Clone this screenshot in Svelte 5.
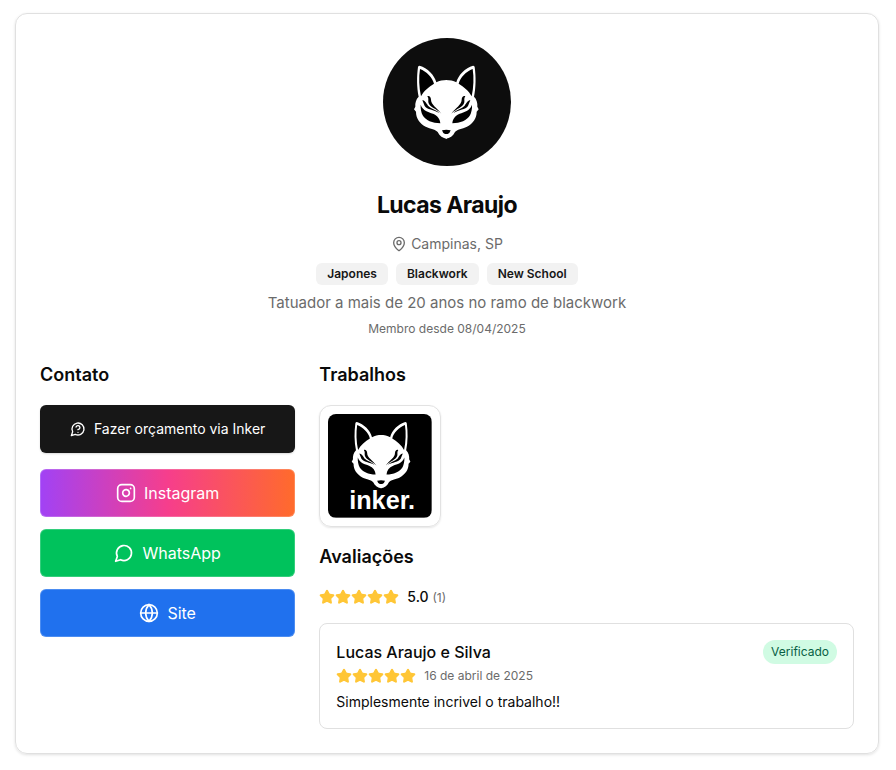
<script>
  const artist = {
    name: "Lucas Araujo",
    location: "Campinas, SP",
    styles: ["Japones", "Blackwork", "New School"],
    bio: "Tatuador a mais de 20 anos no ramo de blackwork",
    since: "08/04/2025",
  };

  const links = [
    { id: "instagram", label: "Instagram", href: "#instagram" },
    { id: "whatsapp", label: "WhatsApp", href: "#whatsapp" },
    { id: "site", label: "Site", href: "#site" },
  ];

  const reviews = [
    {
      author: "Lucas Araujo e Silva",
      date: "16 de abril de 2025",
      stars: 5,
      text: "Simplesmente incrivel o trabalho!!",
      verified: true,
    },
  ];
</script>

{#snippet foxHalf()}
  <path
    fill="#fff"
    d="M216 150C203 150 193 152 184 157C179 136 157 113 134 107Q130 107 129 111C125 139 125 173 131 200C123 207 120 220 121 230L117 238L123 245C123 265 134 280 152 290C167 297 182 298 188 306C194 318 203 325 216 326Z"
  />
  <path fill="#000" d="M135 117C154 124 173 143 177 161C162 170 146 183 138 199C132 173 131 142 135 117Z" />
  <path fill="#000" d="M137 224C144 243 160 246 174 251C188 257 195 267 196 280C173 280 151 271 143 256C139 248 136 236 137 224Z" />
  <path fill="#000" d="M157 199C162 196 168 201 168 209C168 225 186 232 199 251C184 236 163 232 160 217C159 210 162 206 157 199Z" />
  <path fill="#000" d="M142 211C150 211 153 219 159 227C168 236 182 238 193 249C176 239 156 239 149 228Q145 218 142 211Z" />
{/snippet}

{#snippet fox()}
  {@render foxHalf()}
  <g transform="matrix(-1 0 0 1 428 0)">{@render foxHalf()}</g>
  <path fill="#000" d="M201 301Q214 297 227 301Q225 309 218 312H210Q203 309 201 301Z" />
{/snippet}

{#snippet stars(count)}
  <div class="stars" role="img" aria-label="{count} de 5 estrelas">
    {#each Array(count) as _}
      <svg viewBox="0 0 24 24" aria-hidden="true">
        <path
          d="M11.525 2.295a.53.53 0 0 1 .95 0l2.31 4.679a2.123 2.123 0 0 0 1.595 1.16l5.166.756a.53.53 0 0 1 .294.904l-3.736 3.638a2.123 2.123 0 0 0-.611 1.878l.882 5.14a.53.53 0 0 1-.771.56l-4.618-2.428a2.122 2.122 0 0 0-1.973 0L6.396 21.01a.53.53 0 0 1-.77-.56l.881-5.139a2.122 2.122 0 0 0-.611-1.879L2.16 9.795a.53.53 0 0 1 .294-.906l5.165-.755a2.122 2.122 0 0 0 1.597-1.16z"
        />
      </svg>
    {/each}
  </div>
{/snippet}

<main class="card">
  <header>
    <svg class="avatar" viewBox="24 24 384 384" role="img" aria-label={artist.name}>
      <circle cx="216" cy="216" r="192" fill="#0d0d0d" />
      {@render fox()}
    </svg>
    <h1>{artist.name}</h1>
    <p class="location">
      <svg class="icon small" viewBox="0 0 24 24" aria-hidden="true">
        <path d="M20 10c0 4.993-5.539 10.193-7.399 11.799a1 1 0 0 1-1.202 0C9.539 20.193 4 14.993 4 10a8 8 0 0 1 16 0" />
        <circle cx="12" cy="10" r="3" />
      </svg>
      {artist.location}
    </p>
    <ul class="styles">
      {#each artist.styles as style}
        <li>{style}</li>
      {/each}
    </ul>
    <p class="bio">{artist.bio}</p>
    <p class="since">Membro desde {artist.since}</p>
  </header>

  <div class="columns">
    <section>
      <h2>Contato</h2>
      <div class="contact">
        <button type="button" class="quote">
          <svg class="icon small" viewBox="0 0 24 24" aria-hidden="true">
            <path d="M7.9 20A9 9 0 1 0 4 16.1L2 22Z" />
            <path d="M9.09 9a3 3 0 0 1 5.83 1c0 2-3 3-3 3" />
            <path d="M12 17h.01" />
          </svg>
          Fazer orçamento via Inker
        </button>
        <nav>
          {#each links as link}
            <a class={link.id} href={link.href}>
              <svg class="icon" viewBox="0 0 24 24" aria-hidden="true">
                {#if link.id === "instagram"}
                  <rect x="2" y="2" width="20" height="20" rx="5" />
                  <path d="M16 11.37A4 4 0 1 1 12.63 8 4 4 0 0 1 16 11.37z" />
                  <path d="M17.5 6.5h.01" />
                {:else if link.id === "whatsapp"}
                  <path d="M7.9 20A9 9 0 1 0 4 16.1L2 22Z" />
                {:else}
                  <circle cx="12" cy="12" r="10" />
                  <path d="M12 2a14.5 14.5 0 0 0 0 20 14.5 14.5 0 0 0 0-20" />
                  <path d="M2 12h20" />
                {/if}
              </svg>
              {link.label}
            </a>
          {/each}
        </nav>
      </div>
    </section>

    <div class="main">
      <section>
        <h2>Trabalhos</h2>
        <div class="gallery">
          <div class="work">
            <svg viewBox="0 0 312 312" role="img" aria-label="inker.">
              <rect width="312" height="312" fill="#000" />
              <g transform="translate(-35 -73) scale(0.91)">{@render fox()}</g>
              <text x="163" y="286" text-anchor="middle">inker.</text>
            </svg>
          </div>
        </div>
      </section>

      <section>
        <h2>Avaliações</h2>
        <div class="rating">
          {@render stars(5)}
          <p><strong>5.0</strong> <span>({reviews.length})</span></p>
        </div>
        {#each reviews as review}
          <article>
            <div class="review-head">
              <div>
                <h3>{review.author}</h3>
                <div class="meta">
                  {@render stars(review.stars)}
                  <span>{review.date}</span>
                </div>
              </div>
              {#if review.verified}<span class="verified">Verificado</span>{/if}
            </div>
            <p>{review.text}</p>
          </article>
        {/each}
      </section>
    </div>
  </div>
</main>

<style>
  :global(body) {
    background: #fff;
  }

  .card {
    box-sizing: border-box;
    margin: 13px 17px 16px 15px;
    padding: 24px;
    border: 1px solid #e0e0e0;
    border-radius: 12px;
    box-shadow: 0 1px 3px rgba(0, 0, 0, 0.12);
    color: #0a0a0a;
    font-family: Inter, "Liberation Sans", sans-serif;
    font-size: 14px;
    line-height: 20px;
  }

  h1,
  h2,
  h3,
  p,
  ul {
    margin: 0;
    padding: 0;
  }

  header {
    display: flex;
    flex-direction: column;
    align-items: center;
    margin-bottom: 24px;
    text-align: center;
    color: #6b6b6b;
  }

  .avatar {
    width: 128px;
    height: 128px;
    margin-bottom: 23px;
  }

  h1 {
    margin-bottom: 13px;
    color: #0a0a0a;
    font-size: 23px;
    font-weight: 700;
    line-height: 32px;
    letter-spacing: -0.025em;
  }

  .icon {
    flex: none;
    width: 20px;
    height: 20px;
    fill: none;
    stroke: currentColor;
    stroke-width: 2;
    stroke-linecap: round;
    stroke-linejoin: round;
  }

  .icon.small {
    width: 16px;
    height: 16px;
  }

  .location {
    display: flex;
    align-items: center;
    gap: 4px;
    margin-bottom: 9px;
  }

  .styles {
    display: flex;
    flex-wrap: wrap;
    justify-content: center;
    gap: 8px;
    margin-bottom: 6px;
    list-style: none;
  }

  .styles li {
    padding: 3px 11px;
    border-radius: 6px;
    background: #f2f2f2;
    color: #171717;
    font-size: 12px;
    font-weight: 600;
    line-height: 16px;
  }

  .bio {
    margin-bottom: 6px;
    font-size: 15px;
    line-height: 24px;
  }

  .since {
    font-size: 12px;
    line-height: 16px;
  }

  .columns {
    display: grid;
    grid-template-columns: repeat(3, 1fr);
    gap: 24px;
  }

  .main {
    display: flex;
    flex-direction: column;
    gap: 16px;
    grid-column: span 2;
  }

  h2 {
    margin-bottom: 16px;
    font-size: 18px;
    font-weight: 600;
    line-height: 28px;
  }

  .contact {
    display: flex;
    flex-direction: column;
    gap: 16px;
  }

  nav {
    display: flex;
    flex-direction: column;
    gap: 12px;
  }

  .quote,
  nav a {
    display: flex;
    align-items: center;
    justify-content: center;
    gap: 8px;
    box-sizing: border-box;
    width: 100%;
    height: 48px;
    border-radius: 6px;
    color: #fff;
    cursor: pointer;
    text-decoration: none;
  }

  .quote {
    border: 0;
    background: #171717;
    box-shadow: 0 1px 2px rgba(0, 0, 0, 0.15);
    font: 400 14px/20px Inter, "Liberation Sans", sans-serif;
  }

  nav a {
    border: 1px solid rgba(255, 255, 255, 0.2);
    font-size: 16px;
    line-height: 24px;
  }

  .instagram {
    background: linear-gradient(to right, #a142f5, #f63e8c, #ff6b2b) border-box;
  }

  .whatsapp {
    background: #00c25c;
  }

  .site {
    background: #2071ee;
  }

  .gallery {
    display: grid;
    grid-template-columns: repeat(4, 1fr);
    gap: 16px;
  }

  .work {
    padding: 8px;
    border: 1px solid #e2e2e2;
    border-radius: 12px;
    box-shadow: 0 1px 2px rgba(0, 0, 0, 0.1);
  }

  .work svg {
    display: block;
    width: 100%;
    border-radius: 8px;
  }

  .work text {
    fill: #fff;
    font: 700 76px "Liberation Sans", sans-serif;
  }

  .stars {
    display: flex;
  }

  .stars svg {
    width: 16px;
    height: 16px;
    fill: #ffc636;
    stroke: #ffc636;
    stroke-width: 2;
    stroke-linejoin: round;
  }

  .rating,
  .meta {
    display: flex;
    align-items: center;
    gap: 8px;
  }

  .rating {
    margin-bottom: 15px;
  }

  .rating strong {
    font-weight: 500;
  }

  .rating span,
  .meta span {
    color: #6b6b6b;
    font-size: 12px;
  }

  article {
    padding: 16px;
    border: 1px solid #e0e0e0;
    border-radius: 8px;
  }

  .review-head {
    display: flex;
    align-items: flex-start;
    justify-content: space-between;
    margin-bottom: 6px;
  }

  h3 {
    font-size: 16px;
    font-weight: 500;
    line-height: 24px;
  }

  .meta {
    line-height: 20px;
    margin-top: 2px;
  }

  .verified {
    padding: 4px 8px;
    border-radius: 12px;
    background: #d0fbe3;
    color: #086044;
    font-size: 12px;
    line-height: 16px;
  }
</style>
